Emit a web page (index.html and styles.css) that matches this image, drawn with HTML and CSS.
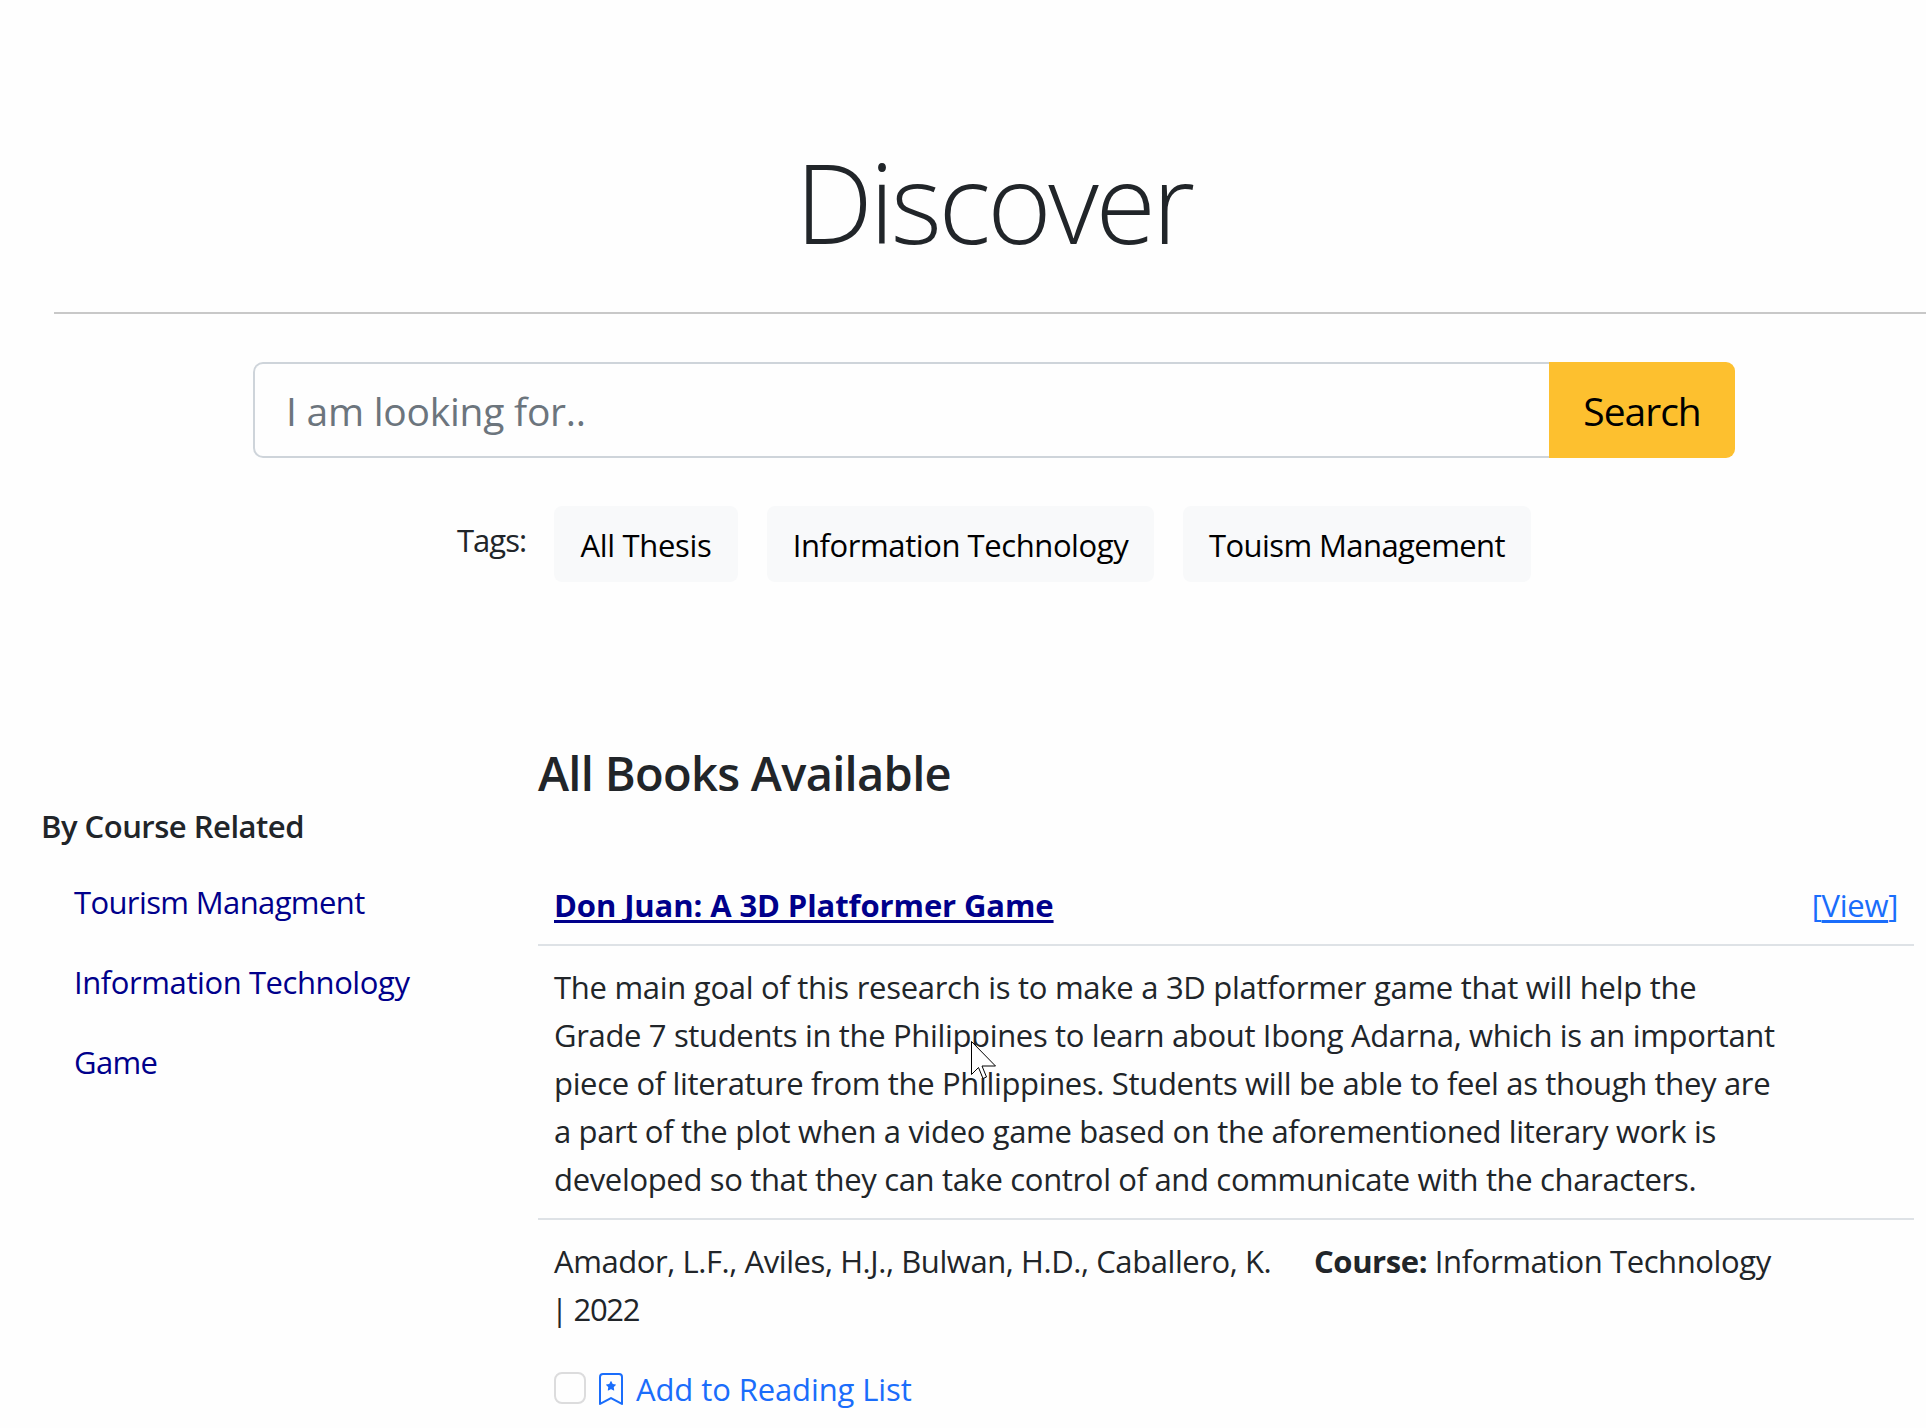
FILE: index.html
```html
<!DOCTYPE html>
<html lang="en">
<head>
<meta charset="utf-8">
<title>Discover</title>
<link rel="stylesheet" href="styles.css">
</head>
<body>
<header class="hero">
  <h1 class="hero-title">Discover</h1>
  <form class="search">
    <input class="search-input" type="text" placeholder="I am looking for..">
    <button class="search-button" type="button">Search</button>
  </form>
  <div class="tags">
    <span class="tags-label">Tags:</span>
    <a class="tag tag-all">All Thesis</a>
    <a class="tag tag-it">Information Technology</a>
    <a class="tag tag-tm">Touism Management</a>
  </div>
</header>
<div class="content">
  <aside class="sidebar">
    <h2 class="sidebar-title">By Course Related</h2>
    <nav class="courses">
      <a class="course">Tourism Managment</a>
      <a class="course course-it">Information Technology</a>
      <a class="course">Game</a>
    </nav>
  </aside>
  <main class="books">
    <h2 class="books-title">All Books Available</h2>
    <div class="row row-head">
      <a class="book-title">Don Juan: A 3D Platformer Game</a>
      <span class="view">[<a class="view-link">View</a>]</span>
    </div>
    <p class="row abstract"><span class="wide">The main goal of this research is to make a 3D platformer game that will help the</span><br>Grade 7 students in the Philippines to learn about Ibong Adarna, which is an important<br>piece of literature from the Philippines. Students will be able to feel as though they are<br>a part of the plot when a video game based on the aforementioned literary work is<br>developed so that they can take control of and communicate with the characters.</p>
    <div class="row meta">
      <div class="authors">Amador, L.F., Aviles, H.J., Bulwan, H.D., Caballero, K.<br><span class="year">| 2022</span></div>
      <div class="book-course"><b>Course:</b> Information Technology</div>
    </div>
    <label class="reading">
      <span class="checkbox"></span>
      <svg class="bookmark" width="32" height="32" viewBox="0 0 16 16" fill="currentColor"><path d="M7.84 4.1a.178.178 0 0 1 .32 0l.634 1.285a.178.178 0 0 0 .134.098l1.42.206c.145.021.204.2.098.303L9.42 6.993a.178.178 0 0 0-.051.158l.242 1.414a.178.178 0 0 1-.258.187l-1.27-.668a.178.178 0 0 0-.165 0l-1.27.668a.178.178 0 0 1-.257-.187l.242-1.414a.178.178 0 0 0-.05-.158l-1.03-1.001a.178.178 0 0 1 .098-.303l1.42-.206a.178.178 0 0 0 .134-.098L7.84 4.1z"/><path d="M2 2a2 2 0 0 1 2-2h8a2 2 0 0 1 2 2v13.5a.5.5 0 0 1-.777.416L8 13.101l-5.223 2.815A.5.5 0 0 1 2 15.5V2zm2-1a1 1 0 0 0-1 1v12.566l4.723-2.482a.5.5 0 0 1 .554 0L13 14.566V2a1 1 0 0 0-1-1H4z"/></svg>
      <span class="reading-text">Add to Reading List</span>
    </label>
  </main>
</div>
<svg class="cursor" width="27" height="40" viewBox="0 0 27 40"><path d="M.5.5V33.5L7.5 26.500L12 37.500L15.500 36L11 25H24.500Z" fill="#fff" stroke="#000"/></svg>
</body>
</html>
```
FILE: styles.css
```css
* { box-sizing: border-box; }
body {
  margin: 0;
  width: 1926px;
  height: 1428px;
  overflow: hidden;
  background: #fefefe;
  color: #212529;
  font: 400 31px/48px "Open Sans", "Noto Sans", sans-serif;
  letter-spacing: -0.34px;
}
h1, h2, p { margin: 0; }
.hero {
  margin-left: 54px;
  width: 1880px;
  padding-top: 135px;
  display: flex;
  flex-direction: column;
  align-items: center;
}
.hero-title {
  align-self: stretch;
  height: 179px;
  padding-right: 1px;
  border-bottom: 2px solid #c8c8c8;
  text-align: center;
  font-size: 110px;
  line-height: 132px;
  font-weight: 300;
  letter-spacing: -3.5px;
}
.search { display: flex; margin-top: 48px; width: 1482px; height: 96px; }
.search-input {
  flex: 1;
  padding: 17px 30px 15px 31px;
  border: 2px solid #ced4da;
  border-right: 0;
  border-radius: 10px 0 0 10px;
  background: #fefefe;
  font: inherit;
  font-size: 39px;
  line-height: 60px;
  letter-spacing: -0.25px;
}
.search-input::placeholder { color: #6c757d; opacity: 1; }
.search-button {
  width: 186px;
  padding: 2px 0 0;
  border: 0;
  border-radius: 0 9px 9px 0;
  background: #fdc02f;
  color: #000;
  font: inherit;
  font-size: 39px;
  letter-spacing: -1px;
}
.tags { display: flex; gap: 29px; margin-top: 48px; }
.tags-label { padding-top: 10px; width: 68px; letter-spacing: -1px; }
.tag {
  height: 76px;
  padding-top: 15px;
  border-radius: 8px;
  background: #f8f9fa;
  color: #000;
  text-align: center;
}
.tag-all { width: 184px; }
.tag-it { width: 387px; letter-spacing: -0.42px; }
.tag-tm { width: 348px; letter-spacing: -0.58px; }
.content { display: flex; padding-top: 161px; }
.sidebar { flex: none; width: 538px; padding: 59px 0 0 41px; }
.sidebar-title { font-size: 31px; line-height: 48px; font-weight: 600; letter-spacing: -0.5px; }
.courses { display: flex; flex-direction: column; gap: 32px; padding: 28px 0 0 33px; color: #00008b; }
.course { letter-spacing: -0.62px; }
.course-it { letter-spacing: -0.42px; }
.books { width: 1376px; }
.books-title { font-size: 47px; line-height: 60px; font-weight: 600; letter-spacing: -0.7px; }
.row { padding: 17px 16px 15px; border-bottom: 2px solid #dee2e6; }
.row-head { display: flex; justify-content: space-between; margin-top: 61px; }
.book-title, .view-link { text-decoration: underline; text-decoration-thickness: 3px; text-underline-offset: 3px; text-decoration-skip-ink: none; }
.book-title { color: #00008b; font-weight: 700; letter-spacing: -0.1px; }
.view { color: #1a6dfb; letter-spacing: -0.3px; }
.wide { letter-spacing: -0.28px; }
.meta { display: flex; gap: 44px; padding-bottom: 0; border-bottom: 0; }
.authors { width: 716px; white-space: nowrap; letter-spacing: -0.42px; }
.year { margin-left: -3px; letter-spacing: -1.3px; }
.book-course { letter-spacing: -0.4px; }
.reading { display: flex; padding: 32px 16px 0; color: #1a6dfb; }
.checkbox { width: 32px; height: 32px; margin-top: 7px; border: 2px solid #dcdcdd; border-radius: 8px; }
.bookmark { margin: 8px 9px 0; }
.reading-text { letter-spacing: -0.1px; }
.cursor { position: absolute; left: 971px; top: 1041px; }
```
